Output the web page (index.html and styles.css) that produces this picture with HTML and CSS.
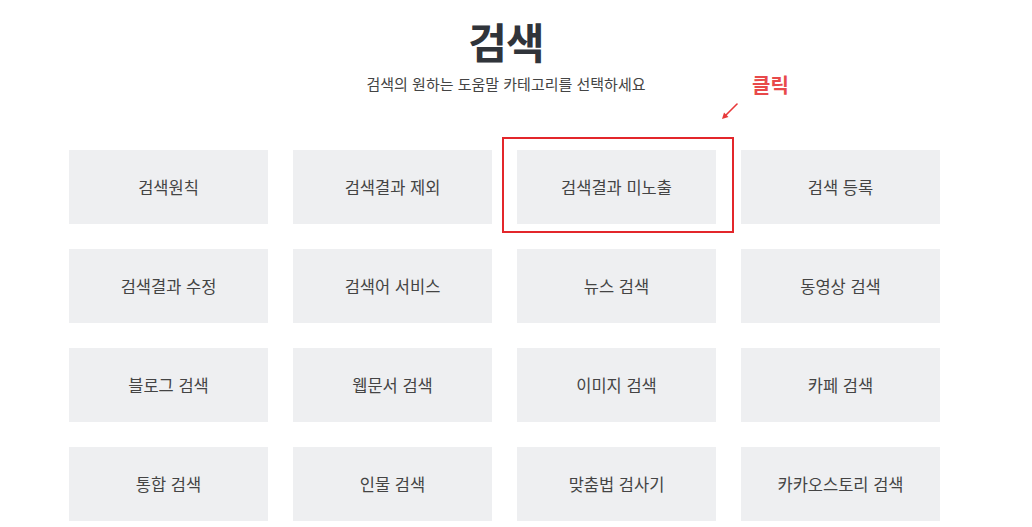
FILE: index.html
```html
<!DOCTYPE html>
<html lang="ko">
<head>
<meta charset="utf-8">
<title>검색</title>
<link rel="stylesheet" href="styles.css">
</head>
<body>
<div class="page">
  <header class="head">
    <h1 class="title">검색</h1>
    <p class="subtitle">검색의 원하는 도움말 카테고리를 선택하세요</p>
  </header>
  <div class="note">
    <span class="note-text">클릭</span>
    <svg class="note-arrow" width="22" height="22" viewBox="0 0 22 22">
      <line x1="18" y1="3" x2="5" y2="16" stroke="#e8393a" stroke-width="1.6" stroke-linecap="round"/>
      <polygon points="3,18 5,11.5 9.5,16" fill="#e8393a"/>
    </svg>
  </div>
  <ul class="grid">
    <li class="card">검색원칙</li>
    <li class="card">검색결과 제외</li>
    <li class="card card-marked">검색결과 미노출</li>
    <li class="card">검색 등록</li>
    <li class="card">검색결과 수정</li>
    <li class="card">검색어 서비스</li>
    <li class="card">뉴스 검색</li>
    <li class="card">동영상 검색</li>
    <li class="card">블로그 검색</li>
    <li class="card">웹문서 검색</li>
    <li class="card">이미지 검색</li>
    <li class="card">카페 검색</li>
    <li class="card">통합 검색</li>
    <li class="card">인물 검색</li>
    <li class="card">맞춤법 검사기</li>
    <li class="card">카카오스토리 검색</li>
  </ul>
</div>
</body>
</html>
```

FILE: styles.css
```css
html, body {
  margin: 0;
  padding: 0;
  background: #ffffff;
}

body {
  font-family: "Noto Sans CJK KR", "Noto Sans", sans-serif;
  color: #333;
}

.page {
  position: relative;
  width: 871px;
  margin-left: 69px;
}

.head {
  text-align: center;
  padding-top: 14px;
  padding-left: 3px;
}

.title {
  margin: 0;
  font-size: 42px;
  line-height: 54px;
  font-weight: 700;
  color: #30343a;
  letter-spacing: -1px;
}

.subtitle {
  margin: 6px 0 0;
  font-size: 15px;
  line-height: 20px;
  color: #444;
  letter-spacing: 0;
}

.note {
  position: absolute;
  left: 650px;
  top: 70px;
  width: 80px;
  height: 50px;
}

.note-text {
  position: absolute;
  left: 33px;
  top: 0;
  font-size: 20px;
  line-height: 30px;
  font-weight: 700;
  color: #e8494a;
}

.note-arrow {
  position: absolute;
  left: 0;
  top: 31px;
}

.grid {
  list-style: none;
  margin: 56px 0 0;
  padding: 0;
  display: grid;
  grid-template-columns: repeat(4, 199px);
  grid-auto-rows: 74px;
  column-gap: 25px;
  row-gap: 25px;
}

.card {
  display: flex;
  align-items: center;
  justify-content: center;
  background: #eeeff1;
  font-size: 16.5px;
  color: #444;
  letter-spacing: 0;
  padding-bottom: 1px;
}

.card-marked {
  position: relative;
}

.card-marked::after {
  content: "";
  position: absolute;
  top: -13px;
  left: -15px;
  right: -18px;
  bottom: -9px;
  border: 2px solid #e3262b;
}
```
